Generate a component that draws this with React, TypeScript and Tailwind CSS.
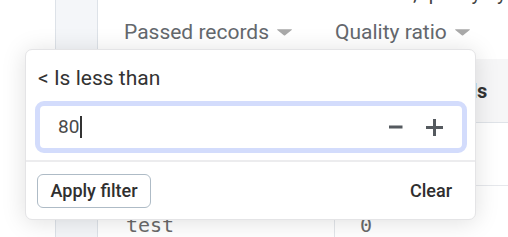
import React from "react";

function Caret() {
  return (
    <svg width="17" height="8" viewBox="0 0 17 8" className="shrink-0">
      <path d="M1.5 1.2 L15.5 1.2 Q16.3 1.2 15.7 1.9 L9.2 7.2 Q8.5 7.8 7.8 7.2 L1.3 1.9 Q0.7 1.2 1.5 1.2 Z" fill="#a9a9a9" />
    </svg>
  );
}

export default function App() {
  return (
    <div
      className="relative w-[508px] h-[237px] overflow-hidden bg-white flex"
      style={{ fontFamily: "Roboto, 'Liberation Sans', sans-serif" }}
    >
      {/* left gutter */}
      <div className="w-[55px] shrink-0 bg-white" />
      <div className="w-[43px] shrink-0 bg-[#f4f6f9] border-l border-r border-[#dde2e8]" />

      {/* main area */}
      <div className="flex-1 flex flex-col min-w-0">
        <div className="h-[18px] overflow-hidden whitespace-nowrap">
          <div className="text-[20px] leading-[20px] -mt-[17px] pl-[242px] text-[#444]">
            Records, quality by app
          </div>
        </div>
        <div className="h-[31px] flex items-center pl-[26px] text-[21px] leading-[24px] text-[#64686d] whitespace-nowrap">
          <div className="w-[211px] flex items-center gap-[7px]">
            <span>Passed records</span>
            <Caret />
          </div>
          <div className="flex items-center gap-[7px]">
            <span>Quality ratio</span>
            <Caret />
          </div>
        </div>
        <div className="h-[14px]" />
        <div className="h-[67px] flex bg-[#f6f6f7] border-b border-[#dfe3e8] whitespace-nowrap">
          <div className="w-[237px] shrink-0 border-r border-[#e3e6ea]" />
          <div className="pl-[25px] flex items-center text-[20px] font-bold text-[#333]">Failed records</div>
        </div>
        <div className="h-[67px] flex border-b border-[#e6e8ec]">
          <div className="w-[237px] shrink-0 border-r border-[#e3e6ea]" />
          <div />
        </div>
        <div className="flex-1 flex whitespace-nowrap text-[20px] text-[#6a6a6a]" style={{ fontFamily: "'DejaVu Sans Mono', 'Liberation Mono', monospace" }}>
          <div className="w-[237px] shrink-0 border-r border-[#e3e6ea] pl-[28px] pt-[27px] leading-[24px]">test</div>
          <div className="pl-[25px] pt-[27px] leading-[24px]">0</div>
        </div>
      </div>

      {/* filter popover */}
      <div className="absolute left-[25px] top-[49px] w-[451px] h-[171px] bg-white border border-[#e4e4e6] rounded-[7px] shadow-[0_2px_24px_rgba(0,0,0,0.13)] flex flex-col">
        <div className="pt-[16px] pl-[12px] text-[21px] leading-[24px] text-[#333]">&lt; Is less than</div>
        <div className="mt-[11px] ml-[9px] mr-[8px] h-[52px] border-[5px] border-[#d3dcfc] rounded-[9px] bg-white flex items-center pl-[18px] pr-[19px]">
          <span className="text-[19px] leading-[24px] text-[#4a4a4a]">80</span>
          <span className="w-[2px] h-[22px] bg-[#333] ml-[1px]" />
          <div className="flex-1" />
          <svg width="14" height="4" viewBox="0 0 14 4" className="mr-[23px]">
            <rect x="0" y="0.5" width="13.5" height="3" fill="#555a5f" />
          </svg>
          <svg width="17" height="17" viewBox="0 0 17 17">
            <rect x="0" y="7" width="17" height="3" fill="#555a5f" />
            <rect x="7" y="0" width="3" height="17" fill="#555a5f" />
          </svg>
        </div>
        <div className="mt-[7px] border-t-2 border-[#ececee]" />
        <div className="flex-1 flex items-center justify-between pl-[11px] pr-[23px]">
          <button className="h-[34px] w-[114px] border border-[#aebbc6] rounded-[6px] bg-white text-[18px] font-medium text-[#2f2f2f] leading-[22px]">
            Apply filter
          </button>
          <span className="text-[18px] font-medium text-[#2f2f2f] leading-[22px]">Clear</span>
        </div>
      </div>
    </div>
  );
}
